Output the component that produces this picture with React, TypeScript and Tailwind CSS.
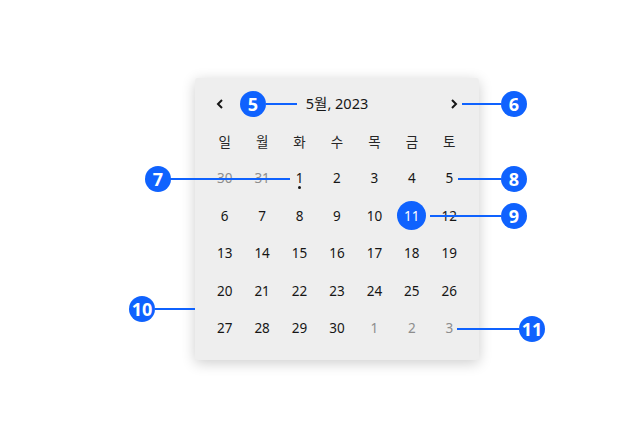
import React from 'react';

const WEEKDAYS = ['일', '월', '화', '수', '목', '금', '토'];

type Day = { n: number; muted?: boolean; today?: boolean; selected?: boolean };

const DAYS: Day[] = [
  { n: 30, muted: true }, { n: 31, muted: true }, { n: 1, today: true }, { n: 2 }, { n: 3 }, { n: 4 }, { n: 5 },
  { n: 6 }, { n: 7 }, { n: 8 }, { n: 9 }, { n: 10 }, { n: 11, selected: true }, { n: 12 },
  { n: 13 }, { n: 14 }, { n: 15 }, { n: 16 }, { n: 17 }, { n: 18 }, { n: 19 },
  { n: 20 }, { n: 21 }, { n: 22 }, { n: 23 }, { n: 24 }, { n: 25 }, { n: 26 },
  { n: 27 }, { n: 28 }, { n: 29 }, { n: 30 }, { n: 1, muted: true }, { n: 2, muted: true }, { n: 3, muted: true },
];

// numbered callouts laid over the screenshot
function Badge({ label, x, y }: { label: string; x: number; y: number }) {
  return (
    <div
      className="absolute flex h-[26px] w-[26px] items-center justify-center rounded-full bg-[#0f62fe] text-[18px] font-bold leading-none text-white"
      style={{ left: x - 13, top: y - 13, fontFamily: '"Open Sans", "Noto Sans", sans-serif' }}
    >
      {label}
    </div>
  );
}

function Line({ x1, x2, y }: { x1: number; x2: number; y: number }) {
  return <div className="absolute h-[2px] bg-[#0f62fe]" style={{ left: x1, top: y - 1, width: x2 - x1 }} />;
}

function Chevron({ dir }: { dir: 'left' | 'right' }) {
  return (
    <svg width="16" height="16" viewBox="0 0 16 16" fill="none">
      <path
        d={dir === 'left' ? 'M10 4 L6 8 L10 12' : 'M6 4 L10 8 L6 12'}
        stroke="#161616"
        strokeWidth="2"
      />
    </svg>
  );
}

export default function App() {
  return (
    <div
      className="relative h-[445px] w-[626px] overflow-hidden bg-white pl-[195px] pt-[78px]"
      style={{ fontFamily: '"Noto Sans", "Noto Sans CJK KR", sans-serif' }}
    >
      <div className="w-[284px] rounded-[3px] bg-[#eeeeee] px-[11px] pb-[13px] pt-[12px] shadow-[0_3px_14px_rgba(0,0,0,0.2)]">
        <div className="flex h-[28px] items-center justify-between px-[6px]">
          <Chevron dir="left" />
          <span className="text-[14.5px] text-[#161616]">5월, 2023</span>
          <Chevron dir="right" />
        </div>
        <div className="mt-[4px] grid grid-cols-7 auto-rows-[37.5px] text-[13.5px] text-[#161616]">
          {WEEKDAYS.map((w) => (
            <div key={w} className="flex items-center justify-center text-[#262626]" style={{ fontFamily: '"Noto Sans CJK KR", sans-serif' }}>
              {w}
            </div>
          ))}
          {DAYS.map((d, i) => (
            <div key={i} className="flex items-center justify-center">
              <div
                className={
                  'relative flex h-[29px] w-[29px] items-center justify-center rounded-full ' +
                  (d.selected ? 'bg-[#0f62fe] text-white' : d.muted ? 'text-[#8d8d8d]' : 'text-[#161616]')
                }
              >
                {d.n}
                {d.today && <span className="absolute bottom-[4px] h-[3px] w-[3px] rounded-full bg-[#161616]" />}
              </div>
            </div>
          ))}
        </div>
      </div>

      <Line x1={266} x2={297} y={104} />
      <Badge label="5" x={253} y={104} />
      <Line x1={462} x2={501} y={104} />
      <Badge label="6" x={514} y={104} />
      <Line x1={170} x2={290} y={179} />
      <Badge label="7" x={158} y={179} />
      <Line x1={458} x2={501} y={179} />
      <Badge label="8" x={514} y={179} />
      <Line x1={430} x2={501} y={216} />
      <Badge label="9" x={514} y={216} />
      <Line x1={155} x2={195} y={309} />
      <Badge label="10" x={142} y={309} />
      <Line x1={457} x2={519} y={329} />
      <Badge label="11" x={532} y={329} />
    </div>
  );
}
